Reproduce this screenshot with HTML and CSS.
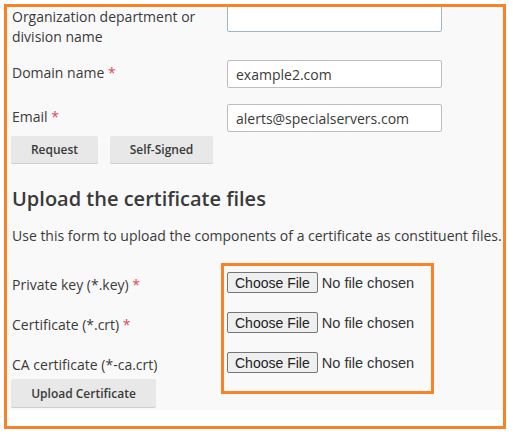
FILE: index.html
```html
<!DOCTYPE html>
<html>
<head>
<meta charset="utf-8">
<link rel="stylesheet" href="styles.css">
</head>
<body>
<div class="frame">
  <div class="panel">
    <div class="form-grid">
      <label class="lbl lbl-top">Organization department or division name</label>
      <input class="txt txt-focus txt-top" type="text" value="">

      <label class="lbl lbl-mid row2">Domain name <span class="req">*</span></label>
      <input class="txt row2" type="text" value="example2.com">

      <label class="lbl lbl-mid row3">Email <span class="req">*</span></label>
      <input class="txt row3" type="text" value="alerts@specialservers.com">
    </div>

    <div class="btn-row">
      <button class="btn btn-req">Request</button>
      <button class="btn btn-self">Self-Signed</button>
    </div>

    <h2 class="heading">Upload the certificate files</h2>
    <p class="intro">Use this form to upload the components of a certificate as constituent files.</p>

    <div class="upload">
      <div class="upload-labels">
        <div class="flbl">Private key (*.key) <span class="req">*</span></div>
        <div class="flbl">Certificate (*.crt) <span class="req">*</span></div>
        <div class="flbl">CA certificate (*-ca.crt)</div>
        <button class="btn btn-upload">Upload Certificate</button>
      </div>
      <div class="file-box">
        <input class="file" type="file">
        <input class="file" type="file">
        <input class="file" type="file">
      </div>
    </div>
  </div>
</div>
</body>
</html>
```

FILE: styles.css
```css
* { box-sizing: border-box; }

body {
  margin: 0;
  background: #ffffff;
  font-family: "Open Sans", "Noto Sans", sans-serif;
  color: #3a3a3a;
}

.frame {
  margin: 4px 0 0 4px;
  width: 502px;
  height: 425px;
  border: 3px solid #f98227;
  background: #ffffff;
  overflow: hidden;
}

.panel {
  background: #f9f9f9;
  height: 403px;
  padding: 0 0 0 4px;
}

.form-grid {
  display: grid;
  grid-template-columns: 216px 215px;
  align-items: start;
}

.lbl {
  font-size: 14px;
  line-height: 20px;
  color: #3a3a3a;
}

.lbl-top { padding-left: 1px; }
.lbl-mid { padding-top: 3px; padding-left: 1px; }

.row2 { margin-top: 13px; }
.row3 { margin-top: 16px; }

.txt {
  height: 28px;
  width: 215px;
  border: 1px solid #bdbdbd;
  border-radius: 2px;
  background: #fff;
  padding: 0 8px;
  font-family: "Open Sans", sans-serif;
  font-size: 14px;
  color: #3a3a3a;
  outline: none;
}

.txt-focus { border-color: #9fb6c5; }
.txt-top { margin-top: -3px; }

.req { color: #dc4a60; }

.btn-row {
  display: flex;
  gap: 12px;
  margin-top: 4px;
}

.btn {
  height: 27px;
  border: none;
  border-radius: 2px;
  background: #e8e8e8;
  box-shadow: 0 1px 0 #cfcfcf;
  font-family: "Open Sans", sans-serif;
  font-size: 12px;
  font-weight: 600;
  color: #3a3a3a;
  padding: 0;
  white-space: nowrap;
}

.btn-req { width: 87px; }
.btn-self { width: 103px; }

.heading {
  margin: 22px 0 0 1px;
  font-size: 20px;
  line-height: 27px;
  font-weight: 600;
  color: #3a3a3a;
}

.intro {
  margin: 14px 0 0 1px;
  font-size: 14px;
  line-height: 20px;
  white-space: nowrap;
}

.upload {
  display: flex;
  align-items: flex-start;
  margin-top: 17px;
}

.upload-labels {
  width: 210px;
  padding-top: 12px;
  display: flex;
  flex-direction: column;
  align-items: flex-start;
}

.flbl {
  font-size: 14px;
  line-height: 20px;
  margin-bottom: 20px;
  padding-left: 1px;
}

.flbl:nth-child(3) { margin-bottom: 4px; }

.btn-upload {
  height: 28px;
  width: 145px;
}

.file-box {
  width: 213px;
  border: 3px solid #f98227;
  padding: 6px 3px 18px 3px;
  display: flex;
  flex-direction: column;
  gap: 19px;
}

.file {
  font-family: "Liberation Sans", Arial, sans-serif;
  font-size: 14.6px;
  color: #333;
  height: 21px;
}

.file::file-selector-button {
  font-family: "Liberation Sans", Arial, sans-serif;
  font-size: 14px;
  color: #222;
  height: 21px;
  padding: 0 7px;
  margin: 0 4px 0 0;
  border: 1px solid #767676;
  border-radius: 2px;
  background: #efefef;
}
```
